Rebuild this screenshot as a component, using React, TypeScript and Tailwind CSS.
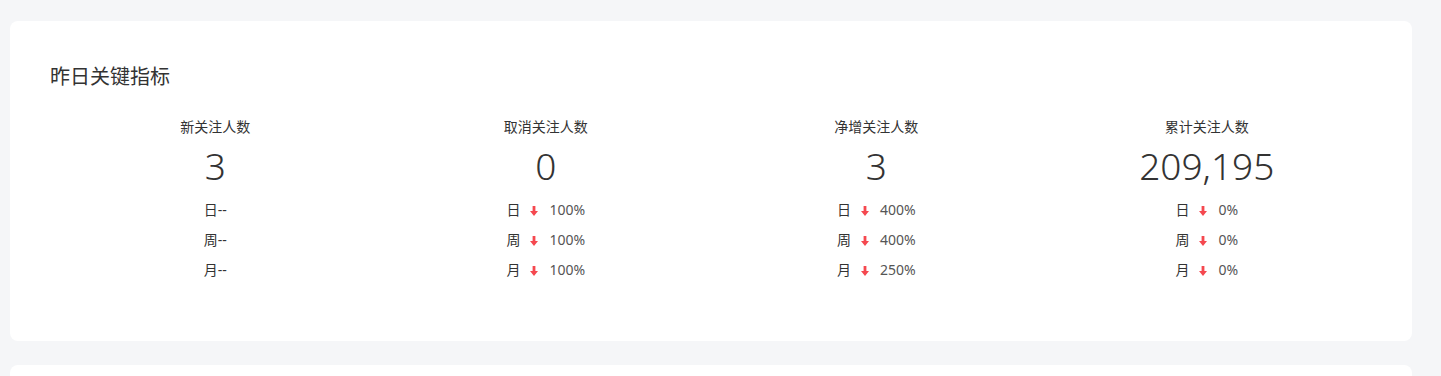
import React from "react";

const Arrow = () => (
  <svg width="8" height="10" viewBox="0 0 8 10" className="block">
    <path d="M2.6 0 H5.4 V5 H8 L4 10 L0 5 H2.6 Z" fill="#f5484f" />
  </svg>
);

type Row = { k: string; v: string | null };
type Col = { label: string; value: string; rows: Row[] };

const cols: Col[] = [
  { label: "新关注人数", value: "3", rows: [{ k: "日", v: null }, { k: "周", v: null }, { k: "月", v: null }] },
  { label: "取消关注人数", value: "0", rows: [{ k: "日", v: "100%" }, { k: "周", v: "100%" }, { k: "月", v: "100%" }] },
  { label: "净增关注人数", value: "3", rows: [{ k: "日", v: "400%" }, { k: "周", v: "400%" }, { k: "月", v: "250%" }] },
  { label: "累计关注人数", value: "209,195", rows: [{ k: "日", v: "0%" }, { k: "周", v: "0%" }, { k: "月", v: "0%" }] },
];

export default function App() {
  return (
    <div
      className="w-[1441px] h-[376px] overflow-hidden bg-[#f5f6f8] pl-[10px] pr-[29px] pt-[21px]"
      style={{ fontFamily: '"Noto Sans", "Noto Sans CJK SC", sans-serif' }}
    >
      <div className="h-[320px] bg-white rounded-[8px] px-[40px] pt-[40px]">
        <div className="h-[32px] leading-[32px] text-[20px] text-[#333]">昨日关键指标</div>
        <div className="grid grid-cols-4 mt-[24px]">
          {cols.map((c) => (
            <div key={c.label} className="flex flex-col items-center">
              <div className="h-[20px] leading-[20px] text-[14px] text-[#333]">{c.label}</div>
              <div className="h-[57px] leading-[58px] text-[37px] font-light text-[#333]">{c.value}</div>
              <div className="flex flex-col items-center">
                {c.rows.map((r) => (
                  <div key={r.k} className="h-[30px] flex items-center text-[14px] text-[#333]">
                    {r.v === null ? (
                      <span>{r.k}--</span>
                    ) : (
                      <>
                        <span>{r.k}</span>
                        <span className="ml-[10px] mt-[3px]">
                          <Arrow />
                        </span>
                        <span className="ml-[11px] text-[#555]">{r.v}</span>
                      </>
                    )}
                  </div>
                ))}
              </div>
            </div>
          ))}
        </div>
      </div>
      <div className="mt-[24px] h-[40px] bg-white rounded-t-[8px]" />
    </div>
  );
}
